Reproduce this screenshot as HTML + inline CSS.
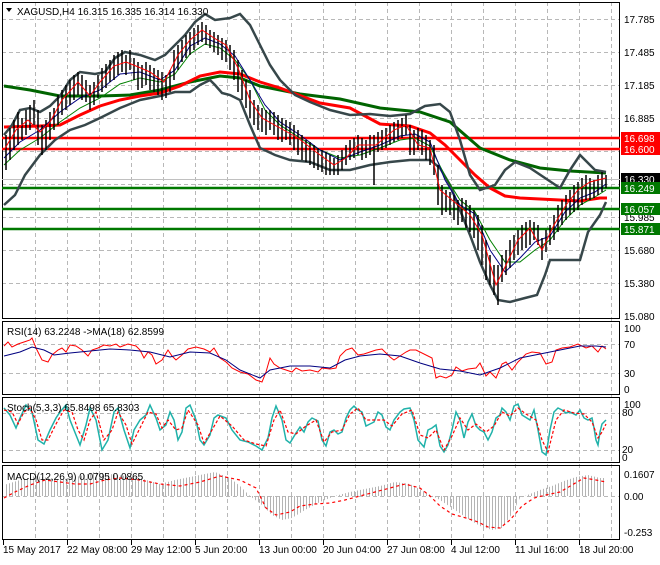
<!DOCTYPE html>
<html><head><style>
body{margin:0;background:#fff;width:660px;height:560px;overflow:hidden;font-family:"Liberation Sans",sans-serif}
svg text{font-family:"Liberation Sans",sans-serif;font-size:10px;fill:#000}
</style></head><body>
<svg width="660" height="560" viewBox="0 0 660 560" xmlns="http://www.w3.org/2000/svg">
<defs>
<pattern id="hs" width="3" height="10" patternUnits="userSpaceOnUse"><rect x="0" y="0" width="1" height="10" fill="#b4b4b4"/></pattern>
</defs>
<rect width="660" height="560" fill="#fff"/>
<g stroke="#b8b8b8" stroke-dasharray="4,3" stroke-width="1">
<path d="M35.5 2V540M67.5 2V540M99.5 2V540M131.5 2V540M163.5 2V540M195.5 2V540M227.5 2V540M259.5 2V540M291.5 2V540M323.5 2V540M355.5 2V540M387.5 2V540M419.5 2V540M451.5 2V540M483.5 2V540M515.5 2V540M547.5 2V540M579.5 2V540M611.5 2V540"/>
<path d="M2 19.5H620M2 52.5H620M2 85.5H620M2 118.5H620M2 151.5H620M2 184.5H620M2 217.5H620M2 250.5H620M2 283.5H620M2 344.5H620M2 373.5H620M2 413.5H620M2 450.5H620M2 496.5H620"/>
</g>
<g fill="none" stroke="#000" stroke-width="1">
<rect x="2.5" y="2.5" width="617" height="316"/>
<rect x="2.5" y="321.5" width="617" height="73"/>
<rect x="2.5" y="397.5" width="617" height="65"/>
<rect x="2.5" y="465.5" width="617" height="74"/>
</g>
<path d="M2 179.5H620" stroke="#c0c0c0"/>
<path d="M2 138H620M2 149H620" stroke="#ff0000" stroke-width="2.5"/>
<path d="M2 188H620M2 209H620M2 229H620" stroke="#007800" stroke-width="2.5"/>
<polyline fill="none" stroke="#006400" stroke-width="3" points="4,86 30,90 60,96 100,96 130,95 160,90 190,82 220,76 240,78 260,86 300,94 340,99 380,108 420,112 450,122 480,148 510,160 540,168 570,171 606,173"/>
<polyline fill="none" stroke="#ff0000" stroke-width="3" points="4,127 40,126 60,125 80,115 100,106 120,100 140,96 160,93 180,86 200,76 220,72 240,74 260,82 280,88 320,103 350,108 380,124 410,126 430,133 445,145 460,160 475,175 490,188 505,196 520,198 540,199 560,200 580,201 600,198 607,198"/>
<g fill="none" stroke="#37474a" stroke-width="2.5">
<polyline points="4,135 12,125 20,110 30,108 40,112 50,106 60,96 70,80 80,72 95,74 105,72 115,58 125,52 140,55 155,60 165,55 175,45 185,35 195,22 205,14 215,20 230,18 240,14 250,25 260,45 270,65 280,80 295,95 310,102 330,110 350,115 370,114 390,116 410,114 425,106 440,104 450,112 460,140 470,175 480,190 495,185 505,170 515,162 530,168 545,178 560,188 570,170 580,155 595,170 606,172"/>
<polyline points="4,205 15,195 25,175 40,155 55,140 70,130 85,125 100,118 120,108 140,100 160,96 175,92 190,92 200,85 210,80 215,85 222,93 230,95 240,100 250,125 260,148 275,155 290,160 310,162 330,170 350,170 370,165 390,162 410,160 430,160 440,168 450,185 460,210 470,235 480,262 490,285 498,300 510,302 525,298 537,295 545,275 550,260 580,260 588,232 600,215 606,202"/>
</g>
<polyline fill="none" stroke="#008000" stroke-width="1" points="4,165 20,150 40,138 60,122 80,108 100,98 120,84 140,78 160,82 175,74 190,54 205,44 220,48 235,60 250,80 265,110 280,125 300,138 320,150 340,158 360,155 380,148 400,140 415,138 430,146 445,176 460,200 475,212 490,240 505,262 520,262 535,250 550,240 565,220 580,205 595,197 606,190"/>
<polyline fill="none" stroke="#000080" stroke-width="1" points="4,158 20,142 40,130 60,112 80,98 100,90 120,74 140,72 160,80 175,70 190,46 205,38 220,44 235,56 250,80 265,105 280,122 300,135 320,150 340,160 360,152 380,145 400,136 415,134 430,142 445,180 460,205 475,214 490,250 505,272 520,258 535,242 550,236 565,212 580,198 595,192 606,184"/>
<g stroke="#000" stroke-width="1.5" fill="none">
<path d="M6 135V170M10 128V160M14 120V150M18 112V145M22 118V140M26 110V135M30 105V130M34 100V125M38 110V145M42 125V155M46 120V150M50 112V140M54 108V130M58 95V125M62 90V115M66 85V110M70 80V105M74 75V100M78 72V95M82 75V100M86 80V102M90 85V110M94 82V105M98 75V98M102 68V92M106 64V88M110 60V82M114 55V80M118 52V75M122 50V72M126 55V75M130 50V70M134 58V80M138 62V90M142 65V88M146 62V85M150 65V90M154 68V92M158 70V95M162 72V100M166 75V98M170 70V92M174 50V80M178 45V70M182 40V62M186 35V58M190 32V55M194 28V50M198 25V45M202 22V42M206 25V45M210 30V48M214 32V52M218 35V55M222 38V60M226 40V62M230 45V70M234 50V80M238 60V92M242 70V100M246 80V108M250 90V118M254 100V125M258 105V130M262 108V132M266 110V135M270 110V130M274 112V135M278 115V140M282 118V142M286 120V140M290 122V145M294 125V150M298 130V155M302 135V160M306 140V162M310 142V165M314 145V168M318 148V170M322 150V172M326 152V175M330 155V175M334 158V175M338 155V175M342 150V170M346 145V165M350 140V160M354 138V158M358 135V155M362 138V160M366 140V158M370 135V155M374 135V185M378 132V152M382 130V150M386 128V148M390 125V145M394 122V142M398 120V140M402 118V138M406 115V135M410 125V155M414 130V155M418 128V150M422 130V155M426 135V160M430 140V165M434 145V175M438 165V205M442 185V215M446 190V212M450 192V215M454 195V220M458 200V225M462 198V222M466 200V228M470 205V232M474 210V238M478 215V250M482 225V265M486 240V280M490 255V285M494 265V295M498 265V305M502 255V282M506 250V275M510 240V268M514 235V260M518 230V255M522 225V250M526 222V248M530 220V245M534 222V240M538 225V245M542 238V260M546 230V252M550 225V245M554 215V240M558 205V232M562 200V225M566 195V220M570 190V215M574 185V212M578 182V210M582 178V205M586 175V200M590 178V200M594 180V198M598 175V195M602 172V192M606 175V188"/>
</g>
<polyline fill="none" stroke="#ff0000" stroke-width="1" points="4,150 16,130 28,120 40,132 50,122 62,100 78,82 90,96 100,82 114,66 126,62 136,66 150,72 164,82 178,55 190,40 202,30 214,38 226,45 238,68 250,100 262,118 280,128 298,138 316,152 334,165 346,158 358,145 376,145 394,130 406,125 418,145 430,148 440,190 452,200 470,215 482,235 496,285 506,265 518,240 530,228 542,250 554,225 566,205 578,190 590,182 606,178"/>
<path d="M6 8L12 8L9 12Z" fill="#000"/>
<text x="17" y="15">XAGUSD,H4  16.315 16.335 16.314 16.330</text>
<g>
<text x="624" y="23">17.785</text>
<text x="624" y="56">17.485</text>
<text x="624" y="89">17.185</text>
<text x="624" y="122">16.885</text>
<text x="624" y="221">15.985</text>
<text x="624" y="254">15.680</text>
<text x="624" y="287">15.380</text>
<text x="624" y="320">15.080</text>
</g>
<rect x="621" y="132" width="39" height="12" fill="#ff0000"/><text x="624" y="142" style="fill:#fff">16.698</text>
<rect x="621" y="143" width="39" height="12" fill="#ff0000"/><text x="624" y="153" style="fill:#fff">16.600</text>
<rect x="621" y="173" width="39" height="12" fill="#000"/><text x="624" y="183" style="fill:#fff">16.330</text>
<rect x="621" y="182" width="39" height="12" fill="#007800"/><text x="624" y="192" style="fill:#fff">16.249</text>
<rect x="621" y="203" width="39" height="12" fill="#007800"/><text x="624" y="213" style="fill:#fff">16.057</text>
<rect x="621" y="223" width="39" height="12" fill="#007800"/><text x="624" y="233" style="fill:#fff">15.871</text>
<text x="7" y="335">RSI(14) 63.2248  -&gt;MA(18) 62.8599</text>
<polyline fill="none" stroke="#ff0000" stroke-width="1" points="4,346 8,342 12,347 18,344 24,342 30,340 32,338 36,348 42,360 48,362 52,355 58,350 62,348 66,352 70,345 76,346 82,350 88,356 92,350 98,348 104,345 110,346 116,344 120,347 128,344 136,346 140,350 144,358 148,352 152,355 156,364 162,360 168,350 172,356 176,360 182,355 188,349 196,347 204,349 210,352 214,348 220,358 226,362 232,368 240,372 248,374 256,380 262,382 266,372 270,358 274,364 280,368 286,370 292,372 296,368 302,371 310,370 318,372 322,368 330,369 336,368 340,356 346,350 352,348 358,355 364,354 370,352 376,350 382,349 390,357 394,360 400,356 406,352 410,350 416,350 432,358 436,378 440,376 446,378 452,375 456,367 462,371 468,369 476,368 480,363 486,376 490,372 496,378 502,364 506,362 512,370 518,362 526,354 532,352 540,353 546,364 552,362 556,350 562,348 570,347 578,344 586,348 592,346 598,352 602,346 606,349"/>
<polyline fill="none" stroke="#000080" stroke-width="1" points="4,356 20,352 32,347 44,350 54,355 70,353 90,351 110,349 130,350 150,352 170,357 190,352 210,353 226,360 240,370 260,378 270,370 290,366 310,366 330,368 345,360 360,356 380,354 400,356 420,363 440,369 460,371 480,375 500,368 520,358 540,354 560,350 580,346 596,346 606,347"/>
<g><text x="624" y="332">100</text><text x="624" y="348">70</text><text x="624" y="377">30</text><text x="624" y="393">0</text></g>
<polyline fill="none" stroke="#20b2aa" stroke-width="1.5" points="4,408 10,415 16,428 20,418 26,405 32,412 38,440 44,444 50,430 56,418 60,412 66,405 70,420 76,435 80,445 86,425 90,408 96,420 102,450 108,440 114,412 118,408 124,430 130,448 134,430 140,420 146,415 150,405 156,418 160,430 166,425 170,412 174,420 178,440 182,432 186,408 190,405 196,420 200,440 204,445 210,435 214,418 218,415 226,418 232,430 240,440 248,442 256,446 262,450 268,438 272,418 276,406 282,420 286,440 290,443 296,433 300,427 304,432 308,422 312,418 318,421 322,440 326,446 330,432 334,430 338,434 342,432 346,418 350,410 354,406 358,410 362,412 366,426 370,424 374,422 378,412 382,415 386,427 390,430 394,420 400,412 404,409 410,408 414,420 418,440 424,447 428,430 432,428 436,425 440,446 444,452 448,445 452,430 456,412 460,420 464,438 468,422 472,414 476,426 480,430 484,432 488,440 492,432 496,418 500,415 502,408 506,412 510,420 514,406 518,404 522,415 530,420 534,410 538,430 542,452 546,455 550,430 554,412 558,408 562,410 566,413 570,412 576,415 580,410 584,418 588,420 592,418 594,428 596,440 598,445 600,432 602,424 606,420"/>
<polyline fill="none" stroke="#ff0000" stroke-width="1.2" stroke-dasharray="3,2" points="4,410 12,412 18,424 24,412 30,408 36,420 42,440 48,440 56,424 64,410 72,412 78,430 84,440 90,420 96,412 104,440 112,430 118,412 126,425 132,444 140,428 148,412 156,414 162,428 168,420 176,430 182,428 188,410 198,425 204,443 212,430 220,416 232,426 244,440 256,444 266,446 274,420 280,410 288,432 296,434 306,426 316,420 324,442 332,432 342,430 350,414 358,408 366,420 376,420 384,420 392,426 402,414 412,410 420,435 428,438 436,430 444,450 452,436 460,418 468,430 476,424 486,432 494,426 502,412 510,416 518,408 526,414 536,420 542,440 548,452 556,420 564,410 574,413 584,414 592,422 598,438 602,432 606,424"/>
<text x="7" y="411">Stoch(5,3,3) 65.8498 65.8303</text>
<g><text x="624" y="408">100</text><text x="622" y="416">80</text><text x="622" y="453">20</text><text x="622" y="461">0</text></g>
<polygon fill="url(#hs)" points="4,496 4,485 20,480 35,476 50,478 65,480 80,476 95,472 110,474 125,476 140,478 160,484 175,480 195,476 215,472 230,478 240,486 250,496 262,505 272,515 282,520 292,518 305,510 320,502 335,496 350,492 365,489 380,486 395,482 410,484 425,492 440,500 455,510 470,520 480,526 492,530 502,528 512,514 520,498 530,494 540,490 552,486 564,481 576,477 588,475 600,478 606,478 606,496"/>
<polyline fill="none" stroke="#ff0000" stroke-width="1.2" stroke-dasharray="3,3" points="4,498 15,492 30,485 45,480 60,482 75,484 90,484 105,480 120,478 140,480 160,484 180,486 200,482 220,476 240,480 256,488 266,508 276,515 290,512 300,506 315,504 330,503 345,500 360,496 375,492 390,488 405,484 420,488 430,496 440,506 452,514 466,518 478,522 488,527 500,528 510,520 522,506 534,498 546,495 560,492 572,485 584,478 596,480 606,482"/>
<text x="7" y="480">MACD(12,26,9) 0.0795 0.0865</text>
<g><text x="624" y="478">0.1607</text><text x="624" y="500">0.00</text><text x="624" y="536">-0.253</text></g>
<path d="M3.5 540V545M67.5 540V545M131.5 540V545M195.5 540V545M259.5 540V545M323.5 540V545M387.5 540V545M451.5 540V545M515.5 540V545M579.5 540V545" stroke="#000"/>
<g>
<text x="3" y="553">15 May 2017</text>
<text x="67" y="553">22 May 08:00</text>
<text x="131" y="553">29 May 12:00</text>
<text x="195" y="553">5 Jun 20:00</text>
<text x="259" y="553">13 Jun 00:00</text>
<text x="323" y="553">20 Jun 04:00</text>
<text x="387" y="553">27 Jun 08:00</text>
<text x="451" y="553">4 Jul 12:00</text>
<text x="515" y="553">11 Jul 16:00</text>
<text x="579" y="553">18 Jul 20:00</text>
</g>
</svg>
</body></html>
